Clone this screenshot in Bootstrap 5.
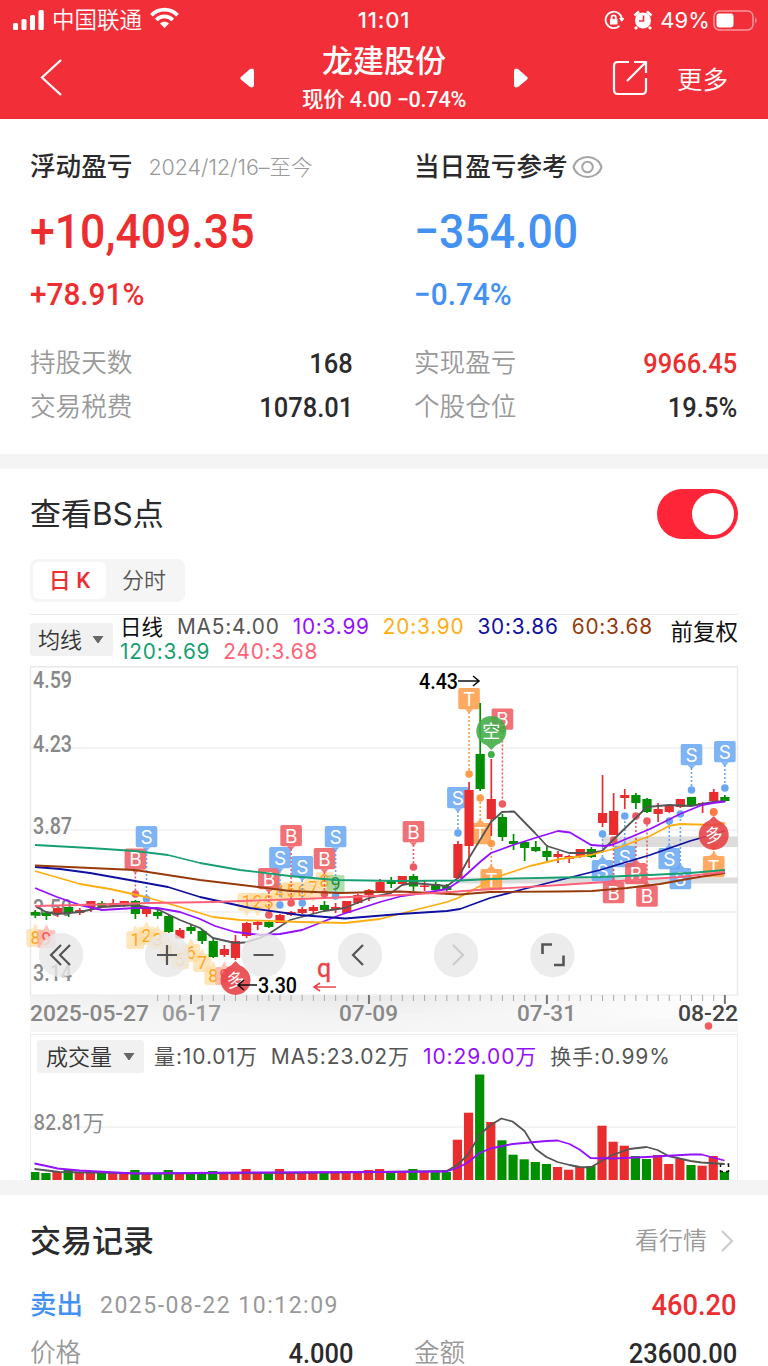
<!DOCTYPE html>
<html lang="zh-CN">
<head>
<meta charset="utf-8">
<meta name="viewport" content="width=device-width, initial-scale=1">
<title>龙建股份</title>
<link rel="stylesheet" href="https://cdn.jsdelivr.net/npm/bootstrap@5.3.0/dist/css/bootstrap.min.css">
<style>
:root{--up:#ed2e30;--down:#4391f2;--ink:#2b2b2d;--mute:#999}
html,body{height:1366px;overflow:hidden}
body{font-family:Roboto,"Noto Sans CJK SC",sans-serif;color:var(--ink);line-height:1;width:768px}
svg{display:block;flex:none}
.topbar{background:#f22f38;height:119px;color:#fff}
.status{height:40px;display:grid;grid-template-columns:1fr auto 1fr;padding:0 9px 0 12px;font:22px/1 Inter,"Noto Sans CJK SC",sans-serif}
.titles{height:79px;display:grid;grid-template-columns:1fr 292px 1fr;padding:0 40px}
.stock{font-size:31px;font-weight:500;line-height:34px;margin-top:5px}
.price{font-size:21.5px;font-weight:500;line-height:28px;margin-top:7px;letter-spacing:-.2px;white-space:nowrap}
.num{display:inline-block;transform:scaleX(.91);transform-origin:right;font-weight:500}
.half{width:384px;padding:25px 31px 23px 30px}
.h-name{height:48px;font-size:25.6px;font-weight:500}
.h-name small{font:350 21.5px/1 Inter,"Noto Sans CJK SC",sans-serif;font-weight:300;color:var(--mute);letter-spacing:-.05px}
.big{height:78px;font-size:49px;transform-origin:left}
.pct{height:48px;font-size:31px;margin-bottom:24px;transform:scaleX(.96);transform-origin:left}
.pair{height:44px;font-size:28px}
.pair span:first-child{font-size:25.6px;color:var(--mute);font-weight:350}
.up{color:var(--up)}.down{color:var(--down)}
.band{height:15px;background:#f4f4f4}
.h-sec{font-size:31px;font-weight:500}
.switch{width:81px;height:50px;border-radius:25px;background:#ff2538;padding:4px}
.knob{width:42px;height:42px;border-radius:50%;background:#fff;margin-left:auto}
.tabs{width:155px;height:43px;background:#f5f5f5;border-radius:8px;padding:3px;font-size:22px}
.tabs .on{width:73px;height:37px;background:#fff;border-radius:6px;color:var(--up);font-weight:500}
.tabs .off{width:76px;color:#555;font-weight:350}
.legend{margin:12px 30px 0;height:52px;border-top:1px solid #eaeaea;font:400 20.8px/26px Inter,"Noto Sans CJK SC",sans-serif}
.ma span{letter-spacing:.8px}
.pick{background:#f1f1f1;border-radius:3px;height:33px;color:#333;font-size:22px;line-height:1}
.volume{margin:2px 30px 0;height:146px;border:1.5px solid #ececec;border-bottom:0;padding-top:4.5px;font:400 21px/1 Inter,"Noto Sans CJK SC",sans-serif;color:#555}
.vals>span{letter-spacing:.9px}
.date{font-size:23px;color:var(--mute);letter-spacing:1.5px}
</style>
</head>
<body class="bg-white">
<header class="topbar">
  <div class="status align-items-center">
    <div class="d-flex align-items-center">
      <svg width="34" height="22" viewBox="0 0 34 22" fill="#fff"><rect x="1" y="14" width="5" height="7" rx="1.5"/><rect x="9.500" y="10" width="5" height="11" rx="1.500"/><rect x="18" y="6" width="5" height="15" rx="1.500"/><rect x="26.500" y="1" width="5.300" height="20" rx="1.500"/></svg>
      <span style="margin-left:6px;font-size:22.5px;font-weight:350">中国联通</span>
      <svg style="margin-left:8px;margin-top:-4px" width="29" height="22" viewBox="0 0 29 22" fill="none" stroke="#fff" stroke-width="3.800"><path d="M1.500 8.300C8.500.7 20.500.7 27.500 8.300"/><path d="M6.300 13C11 8.200 18 8.200 22.700 13"/><path d="M14.500 21 10 16.500C12.500 14.100 16.500 14.100 19 16.500Z" fill="#fff" stroke="none"/></svg>
    </div>
    <span style="font-size:22px;font-weight:500;letter-spacing:.8px;margin-left:-3px">11:01</span>
    <div class="d-flex align-items-center justify-content-end">
      <svg width="20" height="20" viewBox="0 0 20 20" fill="none" stroke="#fff" stroke-width="1.800"><path d="M18 9.500A8.200 8.200 0 1 0 15.500 15.800"/><path d="m14.800 8 6 0-3 4z" fill="#fff" stroke="none"/><rect x="6" y="9" width="7.500" height="5.500" fill="#fff" stroke="none"/><path d="M7.600 9V7.500a2.100 2.100 0 0 1 4.200 0V9"/></svg>
      <svg style="margin-left:9px" width="20" height="20" viewBox="0 0 20 20"><circle cx="10" cy="10.500" r="8" fill="#fff"/><path d="M1.500 5.500 6 1.500M18.500 5.500 14 1.500M4 17l-2 2M16 17l2 2" stroke="#fff" stroke-width="2.600"/><path d="M10.500 5.500v5.500H6" stroke="#f22f38" stroke-width="1.600" fill="none"/></svg>
      <span style="margin:0 3px 0 7px;letter-spacing:.1px;font-size:22px">49%</span>
      <svg width="46" height="21" viewBox="0 0 46 21"><rect x="1" y="1" width="39" height="19" rx="5.500" fill="none" stroke="#fff" stroke-opacity=".5" stroke-width="1.500"/><rect x="3.500" y="3.500" width="17" height="14" rx="3" fill="#fff"/><path d="M42 7.500q3.500 3 0 6z" fill="#fff" opacity=".5"/></svg>
    </div>
  </div>
  <div class="titles">
    <svg style="margin-top:18px" width="24" height="40" viewBox="0 0 24 40" fill="none" stroke="#fff" stroke-width="2.200"><path d="M21 2 2 19.500 21 37"/></svg>
    <div class="d-flex justify-content-between">
      <svg style="margin-top:27px" width="17" height="22" viewBox="0 0 17 22" fill="#fff"><path d="M3.500 9.500 12 2Q16 .3 16 4V18Q16 21.500 12 20L3.500 13Q1 11 3.500 9.500Z"/></svg>
      <div class="text-center"><div class="stock">龙建股份</div><div class="price">现价 4.00 −0.74%</div></div>
      <svg style="margin-top:27px" width="17" height="22" viewBox="0 0 17 22" fill="#fff"><path d="M13.500 9.500 5 2Q1 .3 1 4V18Q1 21.500 5 20L13.500 13Q16 11 13.500 9.500Z"/></svg>
    </div>
    <div class="d-flex justify-content-end">
      <svg style="margin:20px 29px 0 0" width="36" height="36" viewBox="0 0 36 36" fill="none" stroke="#fff" stroke-width="2.200"><path d="M17 2H6Q2 2 2 6V30Q2 34 6 34H30Q34 34 34 30V18"/><path d="M22 2H34V13M34 2 15 21"/></svg>
      <span style="font-size:25.500px;line-height:38px;margin-top:21px;font-weight:350">更多</span>
    </div>
  </div>
</header>

<section class="d-flex" style="height:335px">
  <div class="half">
    <div class="h-name d-flex align-items-center">浮动盈亏<small style="margin-left:16px">2024/12/16–至今</small></div>
    <div class="big num up d-flex align-items-center">+10,409.35</div>
    <div class="pct num up d-flex align-items-center" style="transform:scaleX(.96)">+78.91%</div>
    <div class="pair d-flex align-items-center justify-content-between"><span>持股天数</span><span class="num">168</span></div>
    <div class="pair d-flex align-items-center justify-content-between"><span>交易税费</span><span class="num">1078.01</span></div>
  </div>
  <div class="half">
    <div class="h-name d-flex align-items-center">当日盈亏参考<svg style="margin-left:4px;margin-top:-2px" width="31" height="24" viewBox="0 0 31 24" fill="none" stroke="#a5a5a5" stroke-width="2"><path d="M1.500 12C3 6 9 2 15.500 2S28 6 29.500 12C28 18 22 22 15.500 22S3 18 1.500 12Z"/><circle cx="15.500" cy="12" r="5.300"/></svg></div>
    <div class="big num down d-flex align-items-center">−354.00</div>
    <div class="pct num down d-flex align-items-center">−0.74%</div>
    <div class="pair d-flex align-items-center justify-content-between"><span>实现盈亏</span><span class="num up">9966.45</span></div>
    <div class="pair d-flex align-items-center justify-content-between"><span>个股仓位</span><span class="num">19.5%</span></div>
  </div>
</section>
<div class="band"></div>

<section>
  <div class="d-flex align-items-center justify-content-between" style="height:90px;padding:0 30px 0 30px"><span class="h-sec" style="font-weight:400">查看<span style="font-family:Inter;font-size:31.500px">BS</span>点</span><div class="switch"><div class="knob"></div></div></div>
  <div class="tabs d-flex" style="margin-left:30px"><span class="on d-flex align-items-center justify-content-center">日 K</span><span class="off d-flex align-items-center justify-content-center">分时</span></div>
  <div class="legend d-flex">
    <div class="pick d-flex align-items-center flex-shrink-0" style="width:83px;margin-top:8px;padding-left:8px;font-weight:350">均线<svg style="margin-left:10px" width="12" height="8"><path d="M1 0H11L6 7Z" fill="#666" stroke="#666"/></svg></div>
    <div class="ma" style="margin-left:7px;width:540px;white-space:nowrap">
      <div class="d-flex" style="height:25px;margin-top:-1px"><span style="color:#111;font-size:21.500px;letter-spacing:0">日线</span><span style="color:#555;margin-left:14px">MA5:4.00</span><span style="color:#9410ff;margin-left:13px">10:3.99</span><span style="color:#ffae12;margin-left:13px">20:3.90</span><span style="color:#1010a0;margin-left:13px">30:3.86</span><span style="color:#973a0b;margin-left:13px">60:3.68</span></div>
      <div class="d-flex"><span style="color:#16a070">120:3.69</span><span style="color:#ff6278;margin-left:13px">240:3.68</span></div>
    </div>
    <span class="ms-auto text-nowrap" style="color:#111;font-size:22.500px;line-height:34px">前复权</span>
  </div>
  <svg id="kline" width="768" height="366" viewBox="0 666 768 366"></svg>
  <div class="volume">
    <div class="vals d-flex align-items-center text-nowrap" style="height:34px;padding-left:6px">
      <div class="pick d-flex align-items-center" style="width:107px;padding-left:9px;font-weight:350">成交量<svg style="margin-left:11px" width="12" height="8"><path d="M1 0H11L6 7Z" fill="#666" stroke="#666"/></svg></div>
      <span style="margin-left:10px">量:10.01万</span><span style="margin-left:13px">MA5:23.02万</span><span style="margin-left:13px;color:#9410ff">10:29.00万</span><span style="margin-left:13px">换手:0.99%</span>
    </div>
    <svg id="vol" width="705" height="106" viewBox="31.500 1074 705 106"></svg>
  </div>
</section>
<div class="band"></div>

<section style="padding:0 31px 0 30px">
  <div class="d-flex align-items-center justify-content-between" style="height:92px"><span class="h-sec">交易记录</span><span class="d-flex align-items-center" style="font-size:24px;font-weight:350;color:#999">看行情<svg style="margin:0 3px 0 13px" width="14" height="24" viewBox="0 0 14 24" fill="none" stroke="#ccc" stroke-width="2.200"><path d="M2 2 12 12 2 22"/></svg></span></div>
  <div class="d-flex align-items-center" style="height:36px"><span class="down" style="font-size:26.500px;font-weight:500">卖出</span><span class="date" style="margin-left:17px">2025-08-22 10:12:09</span><span class="num up ms-auto" style="font-size:30px">460.20</span></div>
  <div class="d-flex" style="margin-top:9px">
    <div class="pair d-flex align-items-center justify-content-between" style="width:323px"><span>价格</span><span class="num">4.000</span></div>
    <div class="pair d-flex align-items-center justify-content-between" style="width:323px;margin-left:61px"><span>金额</span><span class="num">23600.00</span></div>
  </div>
</section>

<script src="https://cdn.jsdelivr.net/npm/bootstrap@5.3.0/dist/js/bootstrap.bundle.min.js"></script>
<script>
const X = i => 35.3 + 11.122 * i, RED = '#e92d2f', GREEN = '#008f00';
// direction, body top, body bottom, high, low
const candles = `g 912 915.5 910 918|g 912.5 916 911 920|r 908 913 908 917|g 907 913 907 917|r 910 913 908 915|r 901 907 901 912|g 903 907 901 908|r 903 907 899 907|r 901 905 901 907|g 901 914 900 919|r 909 914 907 917|g 912 916 910 919|g 916 932 915 933|r 930 938.5 928 939|g 927 931 925 934|g 931 941 930 944|g 941 957 937 958|r 949 955 945 957|r 941 958 935 960|r 923 936 922 938|r 922 925 921 930|g 922 927 921 928|r 915 923 914 923|r 912 915 911 916|r 909 913 907 914|r 907 911 905 914|g 905 910 901 911|r 907 909 903 913|r 901 913 901 913|r 895 903 894 904|r 890 895 889 901|r 882 891 879 892|g 880 884 877 888|r 876 884 876 884|g 876 886.5 874 891|r 885.5 887 881 891|g 884 890 882 891|g 886 890 884 892|r 844 878 841 879|r 790 846 782 868|g 754 789 703 791|r 799 819 759 836|g 817 837 814 841|g 841 844 834 850|g 842 848 841 861|g 847 851 841 852|g 851 857 845 861|r 854 857 851 863|r 856 859 855 863|r 849 857 849 858|g 849 857 847 858|r 813 823 775 827|r 811 835 793 835|r 795 798 789 809|g 795 803 793 809|g 799 812 798 813|r 809 814 803 822|r 805 812 804 813|r 799 807 799 808|g 797 805 797 806|r 803 805 802 813|r 792 801 789 802|g 797 801 795 802`.split('|').map(s => s.split(' '));
const line = (p, c) => `<polyline points="${p}" fill="none" stroke="${c}" stroke-width="1.800" stroke-linejoin="round"/>`;
const label = (x, y, t, len, size = 23, fill = '#888', extra = '') => `<text x="${x}" y="${y}" font-size="${size}" fill="${fill}" textLength="${len}" lengthAdjust="spacingAndGlyphs" font-weight="500" ${extra}>${t}</text>`;
let s = '';
s += '<defs><linearGradient id="ax"><stop offset="0" stop-color="#f1f1f1"/><stop offset=".45" stop-color="#e8e8e8"/><stop offset="1" stop-color="#fff"/></linearGradient><linearGradient id="fade" x2="0" y2="1"><stop offset="0" stop-color="#fff" stop-opacity="0"/><stop offset="1" stop-color="#f6f6f6"/></linearGradient></defs>';
s += '<path d="M30 995H738V1032H30Z" fill="url(#ax)"/><path d="M30 995H738V1032H30Z" fill="url(#fade)"/>';
s += '<g stroke="#efefef" stroke-width="1.500"><path d="M30 748H738M30 830H738M30 912H738M30 995H738"/><path d="M30.500 995V666.800H737.500V995" fill="none" stroke="#e9e9e9"/></g>';
for (let i = 11; i < 63; i++) s += `<path d="M${X(i)} 995V${i % 16 == 14 ? 1004 : 1001}" stroke="${i % 16 == 14 ? '#777' : '#aaa'}" stroke-width="${i % 16 == 14 ? 2 : 1}"/>`;
s += label(33, 688, '4.59', 39) + label(33, 752, '4.23', 39) + label(33, 834, '3.87', 39) + label(33, 916, '3.50', 39) + label(33, 981, '3.14', 39);
s += '<path d="M602 836.500H738V847H602ZM458 877.500H738V883.500H458Z" fill="#dcdcdc"/>';

// lettered markers: index, box top, text, colour, dot y
const BLUE = '#69a7f3', ROSE = '#ef5a60', ORG = '#ff9b48';
const marks = [[39,688,'T',ORG,774],[42,708.5,'B',ROSE,804],[38,787,'S',BLUE,833],[34,821,'B',ROSE,867],[40,823,'T',ORG,798],[41,869,'T',ORG,843.5],[59,744,'S',BLUE,790],[62,741,'S',BLUE,788],[51,860,'S',BLUE,834],[52,882,'B',ROSE,840],[53,846,'S',BLUE,816],[54,863,'B',ROSE,816],[55,885.500,'B',ROSE,821],[57,848,'S',BLUE,821],[58,868,'S',BLUE,814],[61,856,'T',ORG,846],[9,848.500,'B',ROSE,894],[10,826,'S',BLUE,899]];
const early = [[21,868,'B',ROSE,915],[22,847,'S',BLUE,905],[23,825,'B',ROSE,903],[24,856,'S',BLUE,903],[26,848,'B',ROSE,894],[27,826,'S',BLUE,896]];
const mark = ([i, y, t, c, d]) => {
  const x = X(i), dn = d > y;
  return `<path d="M${x} ${dn ? y + 24 : y - 3}V${d}" stroke="${c}" stroke-width="1.600" stroke-dasharray="2 2"/><circle cx="${x}" cy="${d}" r="3.800" fill="${c}"/>
  <g opacity=".86"><rect x="${x - 10.8}" y="${y}" width="21.600" height="21.300" rx="1.800" fill="${c}"/><path d="${dn ? `M${x - 4} ${y + 21.2}h8l-4 4z` : `M${x - 4} ${y}h8l-4 -4z`}" fill="${c}"/></g><text x="${x}" y="${y + 17.5}" font-size="19" fill="#fff" text-anchor="middle" font-family="Inter">${t}</text>`;
};
// numbered sequence tags: index, box top, text, kind
const tags = [[0,929,8,1],[1,930,9,2],[9,931,1,1],[10,927,2,1],[11,931,3,1],[12,943,4,1],[13,951,5,1],[14,944,6,1],[15,954,7,1],[16,967,8,1],[17,967,9,2],[19,893,1,1],[20,893,2,1],[21,893,3,1],[22,883,4,1],[23,882,5,1],[24,882,6,1],[25,879,7,1],[26,872,8,1],[27,875,9,3]];
tags.forEach(([i, y, t, k]) => {
  const x = X(i), bg = ['', '#ffd99c', '#ffaaa0', '#8fce86'][k], fg = ['', '#ffa51f', '#f35850', '#258b22'][k];
  s += `<rect x="${x - 9}" y="${y}" width="18" height="18" rx="2" fill="${bg}" opacity=".68"/><path d="M${x - 3} ${i < 18 ? y : y + 18}l3 ${i < 18 ? -6 : 6}l3 ${i < 18 ? 6 : -6}z" fill="${bg}" opacity=".68"/><text x="${x}" y="${y + 15}" font-size="17.500" fill="${fg}" text-anchor="middle">${t}</text>`;
});
s += [...marks, ...early].map(mark).join('');
candles.forEach(([k, a, b, h, l], i) => {
  const c = k == 'r' ? RED : GREEN;
  s += `<path d="M${X(i)} ${h}V${l}" stroke="${c}" stroke-width="1.700"/><rect x="${X(i) - 4.6}" y="${a}" width="9.200" height="${b - a}" fill="${c}"/>`;
});
s += line('35,906 46,912 57,914 80,912 102,907 135,905 157,909 180,920 200,928 213,938 235,943 245,942.5 260,938 270,933 290,920 324,911 345,908 369,898 391,893 402,885 413,883 447,886 458,878 469,858 480,840 491,822 502,812 514,811.5 535,833 547,846 569,853 591,853 602,851 613,840 647,807 669,805 691,806 713,802 725,801', '#555');
s += line('35,888 57,897 80,905 102,910 135,908 157,908 180,912 200,919 215,926 235,932 260,935 280,934 302,930 340,915 380,902 402,896 430,892 447,889 458,882 480,862 491,853 513,845 535,838 558,831 570,832.5 591,845 605,846 613,844.5 650,829 680,814 702,805 713,803 725,801.5', '#9410ff');
s += line('35,871 80,884 110,889 146,897 180,907 213,917 240,920 300,922 345,923 380,919 415,910 447,902 458,898 480,886 491,879 530,866 560,859 591,855 620,847 650,836 669,826 680,824 713,825 725,823', '#ffae12');
s += line('35,867 60,869 90,873 135,881 168,887 200,897 250,908 300,915 345,918.5 400,914 447,911 460,909 490,898 524,889 560,880 600,870 650,855 690,841 725,831', '#1010a0');
s += line('35,865.5 135,870 200,880 250,886 290,891 340,893 400,891.5 460,894.5 490,892 560,891.5 592,891 627,888 660,884 693,878 725,873', '#973a0b');
s += line('35,845 90,848 135,851 168,855 200,863 240,870 290,876 335,880 400,881 460,880.5 490,879 560,877.5 600,877 650,875 690,873 725,870', '#16a070');
s += line('35,906 100,904.5 150,903 213,902 300,899 400,895 450,892 500,888.5 560,885 620,881 680,877 725,872', '#ff6278');

// round long / short signals
const pin = (x, y, t, c, up) => `<g opacity=".9"><circle cx="${x}" cy="${y}" r="15" fill="${c}"/><path d="${up ? `M${x - 6} ${y - 13}l6 -6l6 6z` : `M${x - 6} ${y + 13}l6 6l6 -6z`}" fill="${c}"/></g><text x="${x}" y="${y + 6.5}" font-size="18" fill="#fff" text-anchor="middle" ${up ? `transform="rotate(-8 ${x} ${y})"` : ''}>${t}</text>`;
s += pin(491.3, 731, '空', '#45ad49') + '<circle cx="491.300" cy="754.500" r="3.500" fill="#45ad49"/>';
s += '<circle cx="713.700" cy="812" r="4" fill="#ff7a45"/>' + pin(713.7, 835, '多', '#e84549', 1) + pin(235.5, 980, '多', '#e84549', 1);
s += label(419, 689, '4.43', 39, 22.5, '#000') + label(258, 993, '3.30', 39, 22.5, '#000');
s += '<g fill="none" stroke="#111" stroke-width="1.600"><path d="M458 681H479M473 676l6 5-6 5M257 985H238M244 980l-6 5 6 5"/></g>';
s += '<text x="324" y="977" font-size="25" text-anchor="middle" fill="#e84549" stroke="#e84549" stroke-width=".4">q</text><path d="M336 987H315M320 983l-6 4 6 4" fill="none" stroke="#e84549" stroke-width="1.600"/>';

// floating chart controls
[61, 167, 263.5, 360, 456, 552.5].forEach(x => s += `<circle cx="${x}" cy="955" r="22.200" fill="#e8e8e8" opacity=".82"/>`);
s += '<g fill="none" stroke="#555" stroke-width="2.200"><path d="M61 945 51 955 61 965M70 945 60 955 70 965M157 955H177M167 945V965M253.500 955H273.500M363 945 353 955 363 965"/><path d="M453 945 463 955 453 965" stroke="#ccc"/><path d="M542.500 954V944.500H552M554 965H563.500V955.500" stroke-width="2.600"/></g>';
s += label(30, 1021, '2025-05-27', 119, 22.5) + label(162, 1021, '06-17', 59, 22.5, '#999') + label(339, 1021, '07-09', 59, 22.5) + label(517, 1021, '07-31', 59, 22.5) + label(678, 1021, '08-22', 60, 22.5, '#444');
s += '<circle cx="708.500" cy="1026" r="3.800" fill="#f25a5e"/>';
document.getElementById('kline').innerHTML = s;

const tops = [1172,1173,1172,1170,1173,1173,1173,1173,1173,1170,1173,1173,1170,1173,1173,1173,1171,1173,1173,1169,1173,1173,1169,1173,1173,1173,1173,1173,1171,1171,1170,1169,1172,1172,1169,1172,1172,1172,1139.7,1112.7,1074.5,1122,1140.3,1154.7,1159.3,1162,1164,1167,1169.7,1167,1166,1125.7,1141.7,1145.7,1156,1159,1155,1164,1159,1165,1165.700,1156,1171.7];
let v = '<path d="M30 1127H738" stroke="#efefef" stroke-width="1.500"/>';
tops.forEach((t, i) => v += `<rect x="${X(i) - 4.6}" y="${t}" width="9.200" height="${1180 - t}" fill="${candles[i][0] == 'r' ? RED : GREEN}"/>`);
v += '<rect x="721" y="1164" width="8" height="7.500" fill="#fff" stroke="#111" stroke-width="1.500" stroke-dasharray="4 3"/>';
v += line('35,1169 60,1172 150,1173.5 280,1173 380,1172 447,1171 458,1165 469,1154 480,1135 491,1125 502,1118.5 513,1121.5 525,1131 536,1149 547,1157 558,1162 570,1165 580,1167 591,1167.5 602,1161 613,1155 630,1149 647,1147 658,1150 669,1156 691,1161 702,1162.5 725,1164', '#555');
v += line('35,1163.5 47,1166 58,1168.5 80,1170.5 135,1173.5 250,1172.5 380,1172 447,1171.5 458,1168 469,1162 480,1153 491,1148.5 513,1144 547,1141 558,1140.5 570,1144 580,1149.5 591,1158 613,1158.5 647,1157 691,1154.5 702,1154.5 725,1160.5', '#9410ff');
v += label(34, 1130, '82.81', 47, 21.5) + label(83, 1130.5, '万', 22, 22, '#888', 'style="font-weight:350"');
document.getElementById('vol').innerHTML = v;
</script>
</body>
</html>
